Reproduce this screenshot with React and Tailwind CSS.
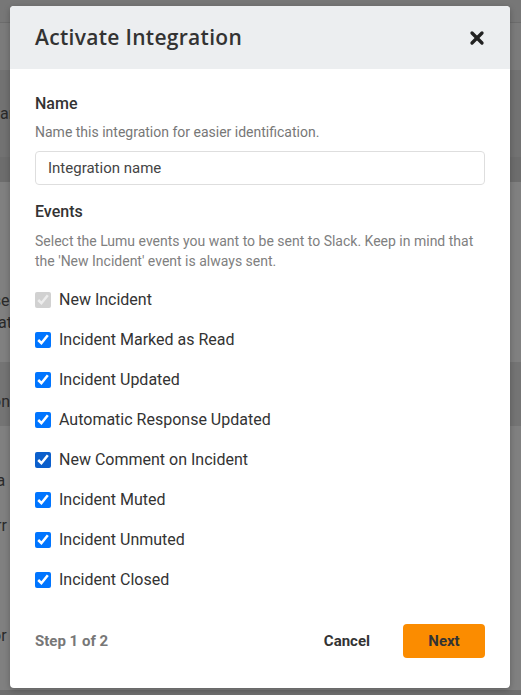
import { X } from "lucide-react";

const events = [
  { label: "New Incident", disabled: true },
  { label: "Incident Marked as Read" },
  { label: "Incident Updated" },
  { label: "Automatic Response Updated" },
  { label: "New Comment on Incident", focused: true },
  { label: "Incident Muted" },
  { label: "Incident Unmuted" },
  { label: "Incident Closed" },
];

function Backdrop() {
  // faded app page behind the overlay
  return (
    <div className="absolute inset-0 flex flex-col text-[#2a2a2a] text-[16px] leading-[24px]">
      <div className="h-[23px] bg-[#777777] border-b border-[#6c6c6c]" />
      <div className="h-[47px] bg-[#7b7b7b]" />
      <div className="h-[87px] bg-[#727272] flex items-center"><span>and</span></div>
      <div className="h-[25px] bg-[#6d6d6d]" />
      <div className="h-[100px] bg-[#808080]" />
      <div className="h-[60px] bg-[#808080] flex flex-col justify-center leading-[22px] -ml-4"><span>use</span><span>that</span></div>
      <div className="h-[20px] bg-[#808080]" />
      <div className="h-[64px] bg-[#747474] flex items-end pb-[12px] -ml-2"><span>on</span></div>
      <div className="h-[35px] bg-[#808080]" />
      <div className="h-[40px] bg-[#808080] flex items-center -ml-3"><span>ea</span></div>
      <div className="h-[10px] bg-[#808080]" />
      <div className="h-[30px] bg-[#808080] flex items-center -ml-1"><span>rr</span></div>
      <div className="h-[110px] bg-[#808080] flex items-end pb-[3px] -ml-2"><span>or</span></div>
      <div className="flex-1 bg-[#808080]" />
      <div className="h-[5px] bg-[#6e6e6e]" />
    </div>
  );
}

export default function App() {
  return (
    <div className="relative w-[521px] h-[695px] overflow-hidden" style={{ fontFamily: "Roboto, 'Liberation Sans', sans-serif" }}>
      <Backdrop />
      <div className="relative flex pt-[6px] pl-[10px]">
        <div className="w-[500px] h-[682px] bg-white rounded-[4px] shadow-[0_2px_6px_rgba(0,0,0,0.25)] flex flex-col overflow-hidden">
          <div className="h-[63px] bg-[#eceef0] flex items-center justify-between px-[25px]">
            <h2 className="text-[21px] font-semibold text-[#333] tracking-[0.3px]" style={{ fontFamily: "'Open Sans', sans-serif" }}>
              Activate Integration
            </h2>
            <X className="w-[20px] h-[20px] text-[#222] -mr-[2px]" strokeWidth={4} />
          </div>

          <div className="flex-1 flex flex-col px-[25px] pt-[23px]">
            <label className="text-[16px] leading-[24px] font-medium text-[#333]">Name</label>
            <p className="text-[14px] leading-[20px] text-[#777] mt-[6px]">Name this integration for easier identification.</p>
            <input
              type="text"
              placeholder="Integration name"
              className="mt-[9px] h-[34px] w-full border border-[#dedede] rounded-[4px] px-[12px] text-[15px] placeholder:text-[#444] outline-none"
            />

            <label className="mt-[15px] text-[16px] leading-[24px] font-medium text-[#333]">Events</label>
            <p className="text-[14px] leading-[19.5px] text-[#808080] mt-[8px]">
              Select the Lumu events you want to be sent to Slack. Keep in mind that the 'New Incident' event is always sent.
            </p>

            <div className="mt-[17px] flex flex-col gap-[16px]">
              {events.map((ev) => (
                <label key={ev.label} className="flex items-center gap-[8px] h-[24px] text-[16px] text-[#333]">
                  <input
                    type="checkbox"
                    defaultChecked
                    disabled={ev.disabled}
                    className={`w-[16px] h-[16px] m-0 ${ev.focused ? "accent-[#0b5fcc]" : "accent-[#0075ff]"}`}
                  />
                  <span>{ev.label}</span>
                </label>
              ))}
            </div>
          </div>

          <div className="flex items-center justify-between px-[25px] pb-[30px]">
            <span className="text-[15px] font-bold text-[#777]">Step 1 of 2</span>
            <div className="flex items-center gap-[33px]">
              <button className="text-[15px] font-bold text-[#333]">Cancel</button>
              <button className="w-[82px] h-[34px] rounded-[4px] bg-[#fb8c00] text-[15px] font-bold text-[#333]">Next</button>
            </div>
          </div>
        </div>
      </div>
    </div>
  );
}
